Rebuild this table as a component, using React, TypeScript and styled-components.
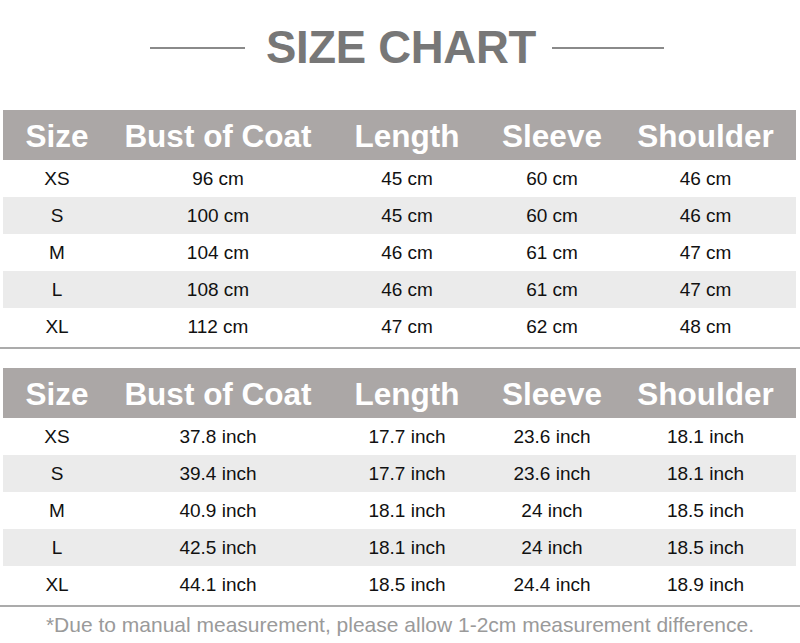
import React from "react";
import styled, { createGlobalStyle } from "styled-components";

const Global = createGlobalStyle`
  html, body { margin: 0; padding: 0; background: #ffffff; }
  body { font-family: "Liberation Sans", Arial, sans-serif; }
`;

const Page = styled.div`
  width: 800px;
  height: 643px;
  background: #fff;
  overflow: hidden;
`;

const TitleRow = styled.div`
  height: 95px;
  display: flex;
  align-items: center;
  justify-content: center;
  padding-left: 14px;
  box-sizing: border-box;
`;

const TitleLine = styled.div<{ $w: number; $gap: number; $side: "l" | "r" }>`
  width: ${(p) => p.$w}px;
  height: 2px;
  background: #8a8a8a;
  ${(p) => (p.$side === "l" ? `margin-right: ${p.$gap}px;` : `margin-left: ${p.$gap}px;`)}
`;

const Title = styled.h1`
  margin: 0;
  font-size: 45.5px;
  line-height: 1;
  font-weight: 700;
  color: #777777;
  letter-spacing: -0.3px;
`;

const Section = styled.section<{ $top: number }>`
  margin-top: ${(p) => p.$top}px;
`;

const cols = "108px 214px 164px 126px 181px";

const HeaderRow = styled.div`
  margin: 0 4px 0 3px;
  display: grid;
  grid-template-columns: ${cols};
  height: 50px;
  padding-top: 3px;
  box-sizing: border-box;
  background: #aba7a6;
  align-items: center;
`;

const HeadCell = styled.div`
  text-align: center;
  color: #ffffff;
  font-weight: 700;
  font-size: 31.5px;
  line-height: 1;
`;

const Row = styled.div<{ $striped: boolean }>`
  margin: 0 4px 0 3px;
  display: grid;
  grid-template-columns: ${cols};
  height: 37px;
  align-items: center;
  background: ${(p) => (p.$striped ? "#ebebeb" : "#ffffff")};
`;

const Cell = styled.div`
  text-align: center;
  color: #111;
  font-size: 19px;
  line-height: 1;
`;

const Divider = styled.div`
  margin-top: 2px;
  height: 2px;
  background: #ababab;
`;

const Note = styled.p`
  margin: 0;
  height: 36px;
  line-height: 36px;
  text-align: center;
  font-size: 21px;
  color: #9a9a9a;
`;

const headers = ["Size", "Bust of Coat", "Length", "Sleeve", "Shoulder"];

const cm = [
  ["XS", "96 cm", "45 cm", "60 cm", "46 cm"],
  ["S", "100 cm", "45 cm", "60 cm", "46 cm"],
  ["M", "104 cm", "46 cm", "61 cm", "47 cm"],
  ["L", "108 cm", "46 cm", "61 cm", "47 cm"],
  ["XL", "112 cm", "47 cm", "62 cm", "48 cm"],
];

const inch = [
  ["XS", "37.8 inch", "17.7 inch", "23.6 inch", "18.1 inch"],
  ["S", "39.4 inch", "17.7 inch", "23.6 inch", "18.1 inch"],
  ["M", "40.9 inch", "18.1 inch", "24 inch", "18.5 inch"],
  ["L", "42.5 inch", "18.1 inch", "24 inch", "18.5 inch"],
  ["XL", "44.1 inch", "18.5 inch", "24.4 inch", "18.9 inch"],
];

const SizeTable: React.FC<{ data: string[][]; top: number }> = ({ data, top }) => (
  <Section $top={top}>
    <HeaderRow>
      {headers.map((h) => (
        <HeadCell key={h}>{h}</HeadCell>
      ))}
    </HeaderRow>
    {data.map((r, i) => (
      <Row key={r[0]} $striped={i % 2 === 1}>
        {r.map((c, j) => (
          <Cell key={j}>{c}</Cell>
        ))}
      </Row>
    ))}
    <Divider />
  </Section>
);

export default function App() {
  return (
    <Page>
      <Global />
      <TitleRow>
        <TitleLine $w={95} $gap={21} $side="l" />
        <Title>SIZE CHART</Title>
        <TitleLine $w={112} $gap={16} $side="r" />
      </TitleRow>
      <SizeTable data={cm} top={15} />
      <SizeTable data={inch} top={19} />
      <Note>*Due to manual measurement, please allow 1-2cm measurement difference.</Note>
    </Page>
  );
}
